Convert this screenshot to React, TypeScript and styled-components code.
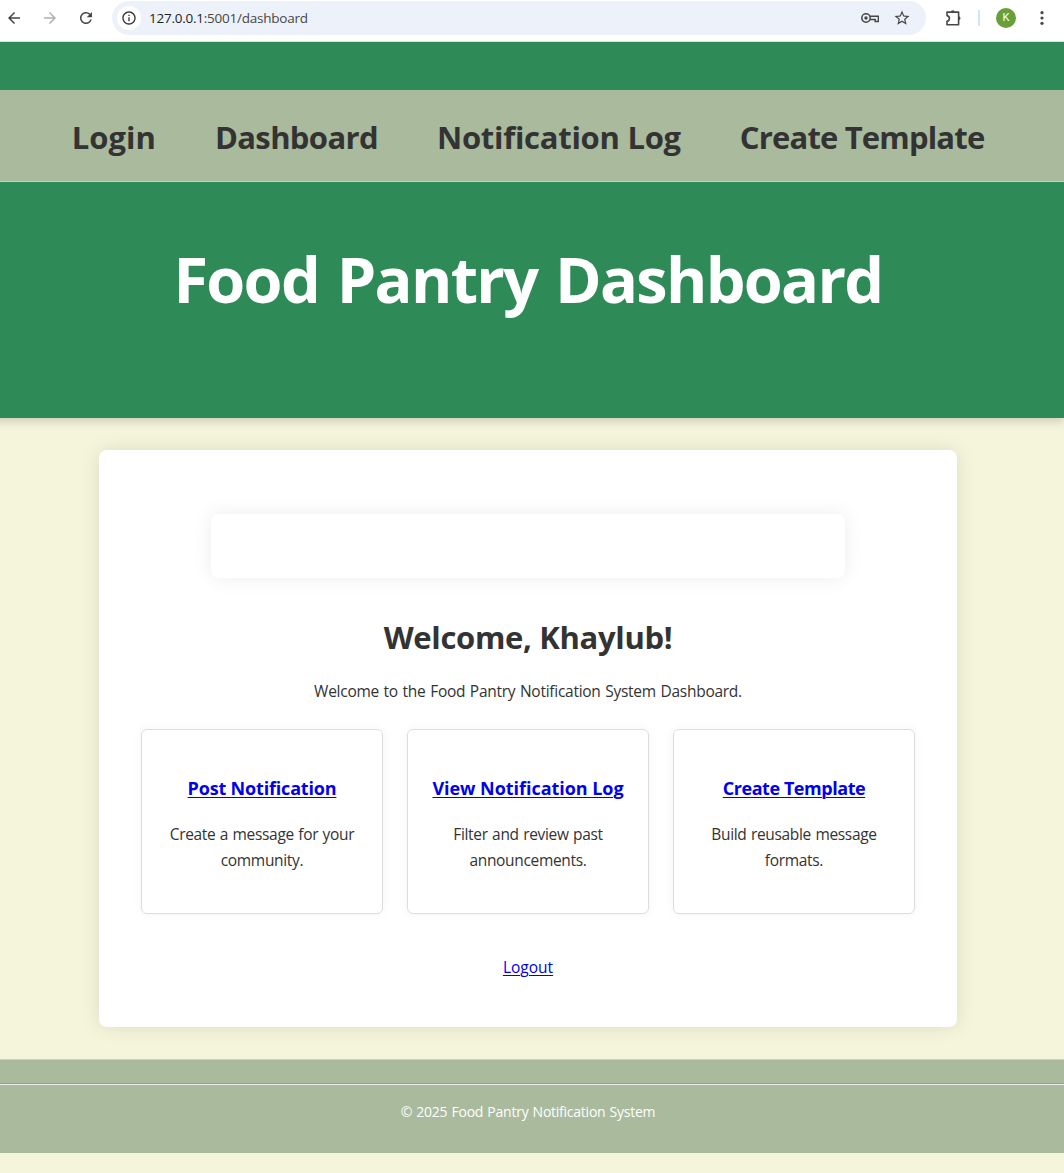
import React from "react";
import styled, { createGlobalStyle } from "styled-components";
import {
  MdArrowBack,
  MdArrowForward,
  MdInfoOutline,
  MdRefresh,
  MdStarBorder,
} from "react-icons/md";

const GlobalStyle = createGlobalStyle`
  *, *::before, *::after { box-sizing: border-box; }
  html { background: #f5f5dc; }
  body {
    margin: 0;
    background: #f5f5dc;
    color: #333;
    font-family: "Open Sans", "Noto Sans", sans-serif;
    font-size: 15.5px;
    line-height: 26px;
    overflow: hidden;
  }
  h1, h2, h3, p { margin: 0; }
`;

const Page = styled.div`
  width: 1064px;
  height: 1173px;
  overflow: hidden;
`;

/* Browser toolbar */

const Toolbar = styled.div`
  display: flex;
  align-items: center;
  height: 42px;
  padding: 0 12px 5px 5px;
  background: #fff;
  border-bottom: 1px solid #dfe3e6;
  color: #474747;
`;

const ToolButton = styled.span<{ $gap?: number; $lead?: number; $muted?: boolean }>`
  display: flex;
  align-items: center;
  justify-content: center;
  width: 18px;
  height: 20px;
  flex: none;
  margin-left: ${(p) => p.$lead ?? 0}px;
  margin-right: ${(p) => p.$gap ?? 18}px;
  color: ${(p) => (p.$muted ? "#b0b0b0" : "#474747")};
`;

const AddressBar = styled.div`
  display: flex;
  align-items: center;
  width: 814px;
  height: 34px;
  padding: 0 15px 0 5px;
  border-radius: 17px;
  background: #ecf1fa;
`;

const SiteInfo = styled.span`
  display: flex;
  align-items: center;
  justify-content: center;
  width: 24px;
  height: 24px;
  border-radius: 50%;
  background: #fff;
  color: #333;
`;

const Url = styled.span`
  flex: 1;
  margin-left: 8px;
  font-size: 13.5px;
  letter-spacing: -0.24px;
  color: #474747;
`;

const UrlHost = styled.span`
  color: #1f1f1f;
`;

const ToolbarDivider = styled.span`
  width: 2px;
  height: 16px;
  margin-right: 16px;
  background: #d3e3fd;
`;

const Avatar = styled.span`
  display: flex;
  align-items: center;
  justify-content: center;
  width: 20px;
  height: 20px;
  margin-right: 17px;
  border-radius: 50%;
  background: #689f38;
  color: #fff;
  font: 400 11px/20px Roboto, sans-serif;
`;

/* Site header */

const Header = styled.header`
  height: 376px;
  margin-left: -8px;
  padding-top: 48px;
  background: #2e8b57;
  box-shadow: 0 4px 8px rgba(0, 0, 0, 0.15);
`;

const Nav = styled.nav`
  display: flex;
  justify-content: center;
  gap: 59px;
  height: 92px;
  padding-top: 26px;
  background: #a9ba9d;
  border-bottom: 1px solid #ccc;
`;

const NavLink = styled.a<{ $tracking: number }>`
  font-size: 31px;
  font-weight: 700;
  line-height: 42px;
  letter-spacing: ${(p) => p.$tracking}px;
  white-space: nowrap;
  color: #333;
`;

const Title = styled.h1`
  padding-top: 54px;
  font-size: 63px;
  line-height: 86px;
  letter-spacing: -1.7px;
  word-spacing: 3px;
  text-align: center;
  color: #fff;
`;

/* Main panel */

const Main = styled.main`
  display: flex;
  flex-direction: column;
  align-items: center;
  width: 858px;
  height: 577px;
  margin: 32px 0 0 99px;
  padding-top: 64px;
  border-radius: 8px;
  background: #fff;
  box-shadow: 0 0 20px rgba(0, 0, 0, 0.1);
  text-align: center;
`;

const MessageBox = styled.div`
  width: 634px;
  height: 64px;
  border-radius: 8px;
  background: #fff;
  box-shadow: 0 0 20px rgba(0, 0, 0, 0.08);
`;

const Heading = styled.h2`
  margin-top: 38px;
  font-size: 31px;
  line-height: 42px;
  letter-spacing: -0.33px;
`;

const Intro = styled.p`
  margin-top: 20px;
  letter-spacing: -0.27px;
  word-spacing: 0.9px;
`;

const Cards = styled.div`
  display: grid;
  grid-template-columns: repeat(3, 242px);
  gap: 24px;
  margin-top: 25px;
`;

const Card = styled.section`
  height: 185px;
  padding: 44px 20px 0;
  border: 1px solid #ddd;
  border-radius: 6px;
  box-shadow: 0 0 10px rgba(0, 0, 0, 0.05);
`;

const CardTitle = styled.h3<{ $tracking: number }>`
  font-size: 18px;
  line-height: 28px;
  letter-spacing: ${(p) => p.$tracking}px;
  white-space: nowrap;
`;

const Link = styled.a`
  color: #0000ee;
  text-decoration: underline;
  text-decoration-thickness: 1px;
  text-underline-offset: 2px;
`;

const CardText = styled.p`
  margin-top: 19px;
  letter-spacing: -0.32px;
  word-spacing: 0.7px;
`;

const Logout = styled.p`
  margin-top: 40px;
`;

/* Footer */

const Footer = styled.footer`
  height: 94px;
  margin-top: 32px;
  padding-top: 23px;
  border-top: 1px solid #ccc;
  background: #a9ba9d;
`;

const Rule = styled.hr`
  height: 2px;
  margin: 0;
  border: 0;
  border-top: 1px solid #9a9a9a;
  border-bottom: 1px solid #eee;
`;

const Copyright = styled.p`
  padding: 16px 8px 0 0;
  font-size: 14px;
  line-height: 22px;
  letter-spacing: -0.245px;
  word-spacing: 0.8px;
  text-align: center;
  color: #fff;
`;

const KeyIcon = () => (
  <svg width="18" height="18" viewBox="0 0 18 18" fill="none" stroke="currentColor" strokeWidth="1.5">
    <circle cx="5" cy="9" r="4.2" />
    <circle cx="5" cy="9" r="1.7" fill="currentColor" stroke="none" />
    <path d="M8.8 7.3h8.6v5.2h-3.2v-2H8.8" />
  </svg>
);

const PuzzleIcon = () => (
  <svg width="18" height="18" viewBox="0 0 18 18" fill="none" stroke="currentColor" strokeWidth="1.6" strokeLinejoin="round">
    <path d="M3 3.1h11.6v12.7H3v-3.6c3.2-.6 3.2-5 0-5.6z" />
    <path d="M6.9 3.1a1.9 1.9 0 0 1 3.8 0zM14.6 7.3a1.9 1.9 0 0 1 0 3.8z" fill="currentColor" stroke="none" />
  </svg>
);

const MenuDots = () => (
  <svg width="18" height="18" viewBox="0 0 18 18" fill="currentColor">
    <circle cx="9" cy="3.7" r="1.6" />
    <circle cx="9" cy="9" r="1.6" />
    <circle cx="9" cy="14.3" r="1.6" />
  </svg>
);

const navItems = [
  { label: "Login", tracking: 0.05 },
  { label: "Dashboard", tracking: -0.63 },
  { label: "Notification Log", tracking: -0.27 },
  { label: "Create Template", tracking: -0.83 },
];

const cards = [
  { title: "Post Notification", tracking: -0.18, lines: ["Create a message for your", "community."] },
  { title: "View Notification Log", tracking: -0.04, lines: ["Filter and review past", "announcements."] },
  { title: "Create Template", tracking: -0.45, lines: ["Build reusable message", "formats."] },
];

export default function App() {
  return (
    <Page>
      <GlobalStyle />
      <Toolbar>
        <ToolButton><MdArrowBack size={18} /></ToolButton>
        <ToolButton $muted><MdArrowForward size={18} /></ToolButton>
        <ToolButton $gap={17}><MdRefresh size={18} /></ToolButton>
        <AddressBar>
          <SiteInfo><MdInfoOutline size={16} /></SiteInfo>
          <Url><UrlHost>127.0.0.1</UrlHost>:5001/dashboard</Url>
          <ToolButton $gap={14}><KeyIcon /></ToolButton>
          <ToolButton $gap={0}><MdStarBorder size={18} /></ToolButton>
        </AddressBar>
        <ToolButton $lead={18} $gap={16}><PuzzleIcon /></ToolButton>
        <ToolbarDivider />
        <Avatar>K</Avatar>
        <ToolButton $gap={0}><MenuDots /></ToolButton>
      </Toolbar>
      <Header>
        <Nav>
          {navItems.map((item) => (
            <NavLink key={item.label} $tracking={item.tracking}>{item.label}</NavLink>
          ))}
        </Nav>
        <Title>Food Pantry Dashboard</Title>
      </Header>
      <Main>
        <MessageBox />
        <Heading>Welcome, Khaylub!</Heading>
        <Intro>Welcome to the Food Pantry Notification System Dashboard.</Intro>
        <Cards>
          {cards.map((card) => (
            <Card key={card.title}>
              <CardTitle $tracking={card.tracking}><Link href="#">{card.title}</Link></CardTitle>
              <CardText>{card.lines[0]}<br />{card.lines[1]}</CardText>
            </Card>
          ))}
        </Cards>
        <Logout><Link href="#">Logout</Link></Logout>
      </Main>
      <Footer>
        <Rule />
        <Copyright>© 2025 Food Pantry Notification System</Copyright>
      </Footer>
    </Page>
  );
}
